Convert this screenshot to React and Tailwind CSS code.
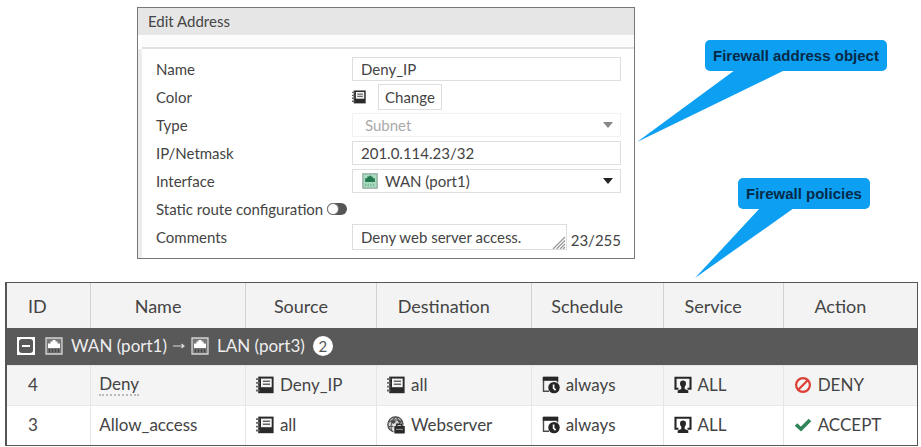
const POLICIES = [
  { id: 4, name: 'Deny', source: 'Deny_IP', destination: 'all', destIcon: 'book', schedule: 'always', service: 'ALL', action: 'DENY' },
  { id: 3, name: 'Allow_access', source: 'all', destination: 'Webserver', destIcon: 'globe', schedule: 'always', service: 'ALL', action: 'ACCEPT' },
];

function AddressIcon({ className = 'size-[18px]' }) {
  return (
    <svg viewBox="0 0 18 18" className={`shrink-0 ${className}`} aria-hidden="true">
      <path d="M2.2 .6H17.600v16.600H2.200z" fill="#2a2a2a" />
      <path d="M5 2.600h10.700v8.600H5z" fill="#f4f4f4" />
      <path d="M6.800 4.600h7.200v1.500H6.800zM6.800 7.400h7.200v1.500H6.800z" fill="#666" />
      <path d="M0 2.200h3.600v1.800H0zM0 6h3.600v1.800H0zM0 9.800h3.600v1.800H0zM0 13.600h3.600v1.800H0z" fill="#666" />
    </svg>
  );
}

function GlobeIcon() {
  return (
    <svg viewBox="0 0 18 18" className="size-[18px] shrink-0" fill="none" aria-hidden="true">
      <circle cx="8.5" cy="8.5" r="7.6" fill="#d4d4d4" stroke="#4a4a4a" strokeWidth="1.4" />
      <path d="M1.5 6.5C5 3 12 3 15.5 6.5M1 10.5h6M4.5 15C3.500 10 4.500 4 8.500 1M8.500 1c3 2 4 4 4 7" stroke="#555" strokeWidth="1.1" />
      <path d="M4 5.500l3-1.500 2 2-3 2zM11 4l3 1v2l-3-1z" fill="#4a4a4a" />
      <path d="M6.500 8.500h11.500V18H6.500z" fill="#f6f6f6" />
      <path d="M9.800 10V8.300h5V10" stroke="#2e2e2e" strokeWidth="1.500" />
      <rect x="7.300" y="9.800" width="10.500" height="7.600" rx="1" fill="#2a2a2a" />
      <path d="M9 13.400h7" stroke="#999" strokeWidth="1" />
    </svg>
  );
}

function ScheduleIcon() {
  return (
    <svg viewBox="0 0 18 18" className="size-[18px] shrink-0" fill="none" aria-hidden="true">
      <path d="M1.500 1.500h14v5M1.500 1.500V15.300H7" stroke="#4a4a4a" strokeWidth="1.400" />
      <path d="M.8.8h15.400V4.800H.8z" fill="#262626" />
      <circle cx="12" cy="11.600" r="5.700" fill="#262626" />
      <path d="M11.600 8.500v3.600l2 2" stroke="#fff" strokeWidth="1.700" />
    </svg>
  );
}

function ServiceIcon() {
  return (
    <svg viewBox="0 0 18 18" className="size-[18px] shrink-0" fill="none" aria-hidden="true">
      <path d="M4.500 12.800H1.500V1.700h15v11.100h-3" stroke="#262626" strokeWidth="2.100" />
      <path d="M9 4.500c1.900 0 3 1.300 3 3.100 0 1.500-.6 2.500-1.300 3.100v2.300l3.600 1.500V17H3.700v-2.500l3.600-1.500v-2.300C6.600 10.100 6 9.100 6 7.600c0-1.800 1.100-3.100 3-3.100z" fill="#262626" />
    </svg>
  );
}

function PortIcon({ green = false }) {
  return green ? (
    <svg viewBox="0 0 18 18" className="size-4" aria-hidden="true">
      <path d="M1 1h16v16H1z" fill="#a9dcc0" stroke="#8ba797" strokeWidth="1.400" />
      <path d="M3.500 10V6H6V4h2V3h2v1h2v2h2.500v4z" fill="#23784d" />
      <path d="M4 12v3M7 12v3M10 12v3M13 12v3" stroke="#77b596" strokeWidth="1.400" />
    </svg>
  ) : (
    <svg viewBox="0 0 18 18" className="size-[18px] shrink-0" aria-hidden="true">
      <path d="M1 1h16v16H1z" fill="#777" stroke="#d4d4d4" strokeWidth="1.300" />
      <path d="M3 11V6.500h2.500V4.500h2V3h3v1.500h2v2H15V11z" fill="#fff" />
      <path d="M4.500 12v3.500M7.500 12v3.500M10.500 12v3.500M13.500 12v3.500" stroke="#444" strokeWidth="1.500" />
    </svg>
  );
}

function DenyIcon() {
  return (
    <svg viewBox="0 0 18 18" className="size-[18px] shrink-0" fill="none" aria-hidden="true">
      <circle cx="9" cy="9" r="6.900" stroke="#dc3f35" strokeWidth="2.200" />
      <path d="M4.200 13.800l9.600-9.600" stroke="#dc3f35" strokeWidth="2.200" />
    </svg>
  );
}

function AcceptIcon() {
  return (
    <svg viewBox="0 0 18 18" className="size-[18px] shrink-0" fill="none" aria-hidden="true">
      <path d="M2 8.500l5 4.600 9-9" stroke="#2f8558" strokeWidth="3.600" />
    </svg>
  );
}

function Caret({ className }) {
  return (
    <svg viewBox="0 0 10 6" className={`pointer-events-none absolute right-2 top-1/2 h-[6px] w-[10px] -translate-y-1/2 ${className}`} aria-hidden="true">
      <path d="M0 0h10L5 6z" fill="currentColor" />
    </svg>
  );
}

function Field({ label, htmlFor, children }) {
  return (
    <div className="grid h-7 grid-cols-[196px_1fr] items-center">
      <label htmlFor={htmlFor}>{label}</label>
      {children}
    </div>
  );
}

const BOX = 'h-6 w-full border border-[#dedede] bg-white px-2 outline-none';

function EditAddress() {
  return (
    <form className="border border-[#777] bg-white text-[15px] leading-5 text-[#444]">
      <h1 className="h-[27px] bg-[#e6e6e6] px-[10px] pt-[3px]">Edit Address</h1>
      <div className="ml-1 h-[14px] border-b-2 border-[#e2e2e2] bg-[#fcfcfc]" />
      <div className="border-l-4 border-[#ececec] pb-[7px] pl-[14px] pr-[13px] pt-[6px]">
        <Field label="Name" htmlFor="name">
          <input id="name" defaultValue="Deny_IP" className={BOX} />
        </Field>
        <Field label="Color" htmlFor="color">
          <div className="flex items-center gap-3">
            <AddressIcon className="size-[14px]" />
            <button id="color" type="button" className="h-[26px] border border-[#dedede] px-[6px]">Change</button>
          </div>
        </Field>
        <Field label="Type" htmlFor="type">
          <div className="relative">
            <select id="type" disabled className="block h-6 w-full appearance-none border border-[#f1f1f1] bg-white px-3 text-[#aaa] opacity-100">
              <option>Subnet</option>
            </select>
            <Caret className="text-[#888]" />
          </div>
        </Field>
        <Field label="IP/Netmask" htmlFor="ip">
          <input id="ip" defaultValue="201.0.114.23/32" className={BOX} />
        </Field>
        <Field label="Interface" htmlFor="interface">
          <div className="relative">
            <select id="interface" className="block h-6 w-full appearance-none border border-[#dedede] bg-white pl-8 pr-5">
              <option>WAN (port1)</option>
            </select>
            <span className="pointer-events-none absolute left-[10px] top-1"><PortIcon green /></span>
            <Caret className="text-[#222]" />
          </div>
        </Field>
        <div className="flex h-7 items-center gap-1">
          <label htmlFor="static-route">Static route configuration</label>
          <span className="relative flex">
            <input id="static-route" type="checkbox" role="switch" className="h-3 w-5 appearance-none rounded-full bg-[#555]" />
            <span className="pointer-events-none absolute left-0 top-0 size-3 rounded-full border border-[#777] bg-white" />
          </span>
        </div>
        <Field label="Comments" htmlFor="comments">
          <div className="flex items-end gap-1">
            <div className="relative flex-1">
              <textarea id="comments" rows="1" defaultValue="Deny web server access." className="block h-[26px] w-full resize-none overflow-hidden border border-[#dedede] px-2 pt-[2px] outline-none" />
              <svg viewBox="0 0 14 14" className="pointer-events-none absolute bottom-px right-px size-[14px]" aria-hidden="true">
                <path d="M1 14L13 2M4.500 14L13 5.500M8 14l5-5M11 14l2-2" stroke="#999" strokeWidth="1.300" />
              </svg>
            </div>
            <span>23/255</span>
          </div>
        </Field>
      </div>
    </form>
  );
}

function Callout({ className, tail, children }) {
  return (
    <div className={`relative w-fit rounded-[5px] bg-[#0c9ff2] px-2 font-['Liberation_Sans',Arial,sans-serif] text-[15px] font-bold leading-[31px] text-[#062a48] ${className}`}>
      {children}
      {tail}
    </div>
  );
}

function Th({ children, className = 'pr-5 text-center' }) {
  return <th scope="col" className={`border-l border-[#d2d2d2] font-normal first:border-l-0 ${className}`}>{children}</th>;
}

function Td({ icon, children, className = 'px-[10px]' }) {
  return (
    <td className={`border-l border-[#e6e6e6] first:border-l-0 ${className}`}>
      <div className="flex items-center gap-[6px]">
        {icon}
        {children}
      </div>
    </td>
  );
}

function PolicyTable() {
  return (
    <div className="border border-l-2 border-[#555]">
      <table className="w-full table-fixed border-collapse text-[17px] leading-6 text-[#444]">
        <colgroup>
          <col className="w-[9.200%]" />
          <col className="w-[17%]" />
          <col className="w-[14.400%]" />
          <col className="w-[17%]" />
          <col className="w-[14.500%]" />
          <col className="w-[13.200%]" />
          <col />
        </colgroup>
        <thead>
          <tr className="h-[45px] bg-[#f3f3f3] text-[18px]">
            <Th className="pl-[21px] text-left">ID</Th>
            <Th>Name</Th>
            <Th>Source</Th>
            <Th>Destination</Th>
            <Th>Schedule</Th>
            <Th>Service</Th>
            <Th>Action</Th>
          </tr>
        </thead>
        <tbody>
          <tr className="h-[37px] bg-[#595959] text-[#eee]">
            <td colSpan="7" className="pl-[10px]">
              <div className="flex items-center">
                <button type="button" aria-label="Collapse group" className="mr-[10px] flex size-[18px] items-center justify-center bg-white">
                  <span className="flex size-[14px] items-center justify-center rounded-[3px] bg-[#595959]">
                    <span className="h-[2px] w-2 bg-white" />
                  </span>
                </button>
                <PortIcon />
                <span className="ml-2">WAN (port1)</span>
                <svg viewBox="0 0 12 8" className="mx-[6px] h-2 w-3" fill="none" stroke="#ddd" strokeWidth="1.200" aria-hidden="true">
                  <path d="M0 4h11M8.500 2L11 4 8.500 6" />
                </svg>
                <PortIcon />
                <span className="ml-2">LAN (port3)</span>
                <span className="ml-2 flex size-5 items-center justify-center rounded-full bg-white text-[15px] text-[#555]">2</span>
              </div>
            </td>
          </tr>
          {POLICIES.map((row) => (
            <tr key={row.id} className="h-10 border-t border-[#e8e8e8] odd:bg-white even:bg-[#f4f4f4]">
              <Td className="pl-[21px]">{row.id}</Td>
              <Td className="px-2">
                <span className={row.id === 4 ? 'border-b-2 border-dotted border-[#bbb] leading-5' : ''}>{row.name}</span>
              </Td>
              <Td icon={<AddressIcon />}>{row.source}</Td>
              <Td icon={row.destIcon === 'globe' ? <GlobeIcon /> : <AddressIcon />}>{row.destination}</Td>
              <Td icon={<ScheduleIcon />}>{row.schedule}</Td>
              <Td icon={<ServiceIcon />}>{row.service}</Td>
              <Td icon={row.action === 'DENY' ? <DenyIcon /> : <AcceptIcon />}>{row.action}</Td>
            </tr>
          ))}
        </tbody>
      </table>
    </div>
  );
}

export default function App() {
  return (
    <main className="bg-white pt-[7px] font-['Lato',sans-serif]">
      <div className="grid grid-cols-[137fr_498fr_286fr]">
        <div className="col-start-2">
          <EditAddress />
        </div>
        <div className="pt-[33px]">
          <Callout
            className="ml-[70px]"
            tail={
              <svg viewBox="0 0 146 72" className="absolute -left-[68px] top-[30px] h-[72px] w-[146px]" aria-hidden="true">
                <path d="M98 0h50L0 72z" fill="#0c9ff2" />
              </svg>
            }
          >
            Firewall address object
          </Callout>
          <Callout
            className="ml-[103px] mt-[107px]"
            tail={
              <svg viewBox="0 0 100 70" className="absolute -left-[43px] top-[30px] h-[70px] w-[100px]" aria-hidden="true">
                <path d="M65 0h34L0 70z" fill="#0c9ff2" />
              </svg>
            }
          >
            Firewall policies
          </Callout>
        </div>
      </div>
      <div className="mt-[23px] pb-[2px] pl-[5px] pr-[3px]">
        <PolicyTable />
      </div>
    </main>
  );
}
